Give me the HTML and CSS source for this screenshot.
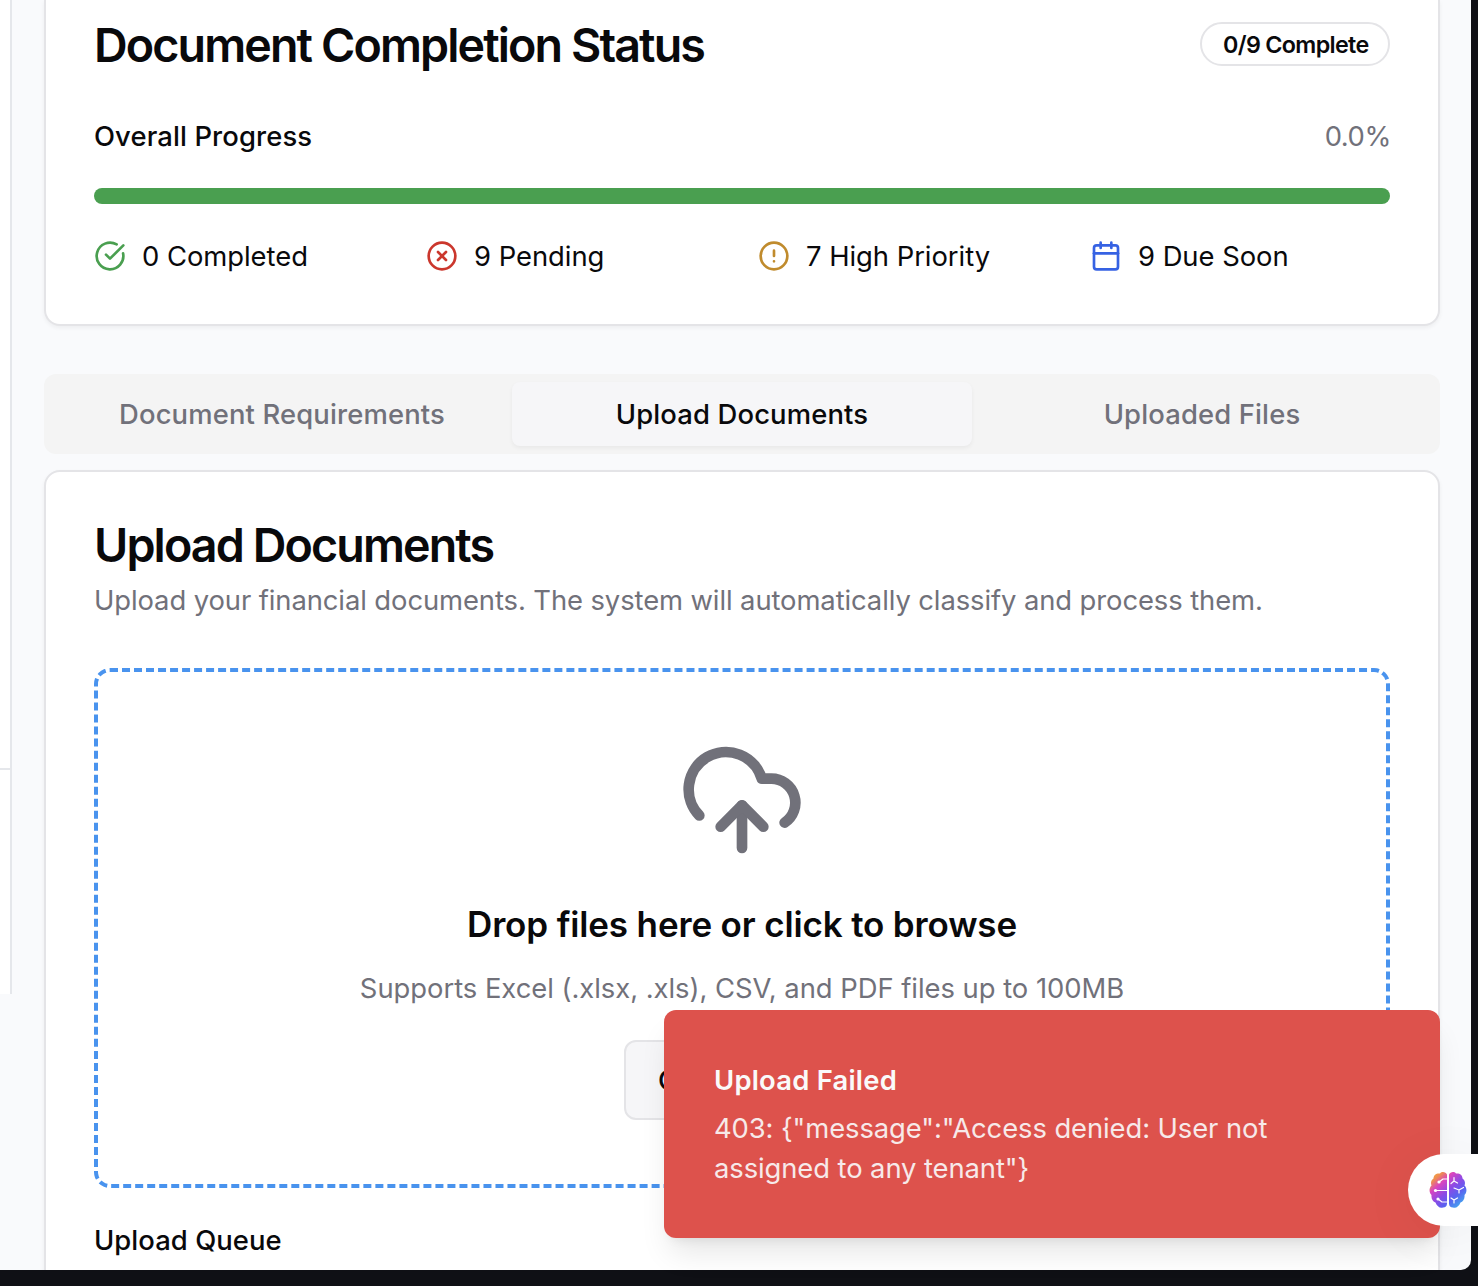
FILE: index.html
```html
<!DOCTYPE html>
<html lang="en">
<head>
<meta charset="utf-8">
<title>Upload Documents</title>
<link rel="stylesheet" href="styles.css">
</head>
<body>
<div class="window">
  <aside class="sidebar"><div class="sidebar-section"></div></aside>
  <main class="main">
    <section class="card status-card">
      <div class="card-header">
        <h2 class="card-title title-status">Document Completion Status</h2>
        <span class="badge">0/9 Complete</span>
      </div>
      <div class="progress-row">
        <span class="label">Overall Progress</span>
        <span class="percent">0.0%</span>
      </div>
      <div class="progress"></div>
      <div class="stats">
        <div class="stat">
          <svg class="icon green" viewBox="0 0 24 24"><path d="M21.801 10A10 10 0 1 1 17 3.335"/><path d="m9 11 3 3L22 4"/></svg>
          <span>0 Completed</span>
        </div>
        <div class="stat">
          <svg class="icon red" viewBox="0 0 24 24"><circle cx="12" cy="12" r="10"/><path d="m15 9-6 6M9 9l6 6"/></svg>
          <span>9 Pending</span>
        </div>
        <div class="stat">
          <svg class="icon amber" viewBox="0 0 24 24"><circle cx="12" cy="12" r="10"/><path d="M12 8v4M12 16h.01"/></svg>
          <span>7 High Priority</span>
        </div>
        <div class="stat">
          <svg class="icon blue" viewBox="0 0 24 24"><path d="M8 2v4M16 2v4"/><rect width="18" height="18" x="3" y="4" rx="2"/><path d="M3 10h18"/></svg>
          <span>9 Due Soon</span>
        </div>
      </div>
    </section>

    <nav class="tabs">
      <span class="tab">Document Requirements</span>
      <span class="tab active">Upload Documents</span>
      <span class="tab">Uploaded Files</span>
    </nav>

    <section class="card upload-card">
      <h2 class="card-title">Upload Documents</h2>
      <p class="description">Upload your financial documents. The system will automatically classify and process them.</p>
      <div class="dropzone">
        <svg class="icon cloud" viewBox="0 0 24 24"><path d="M4 14.899A7 7 0 1 1 15.71 8h1.79a4.5 4.5 0 0 1 2.5 8.242"/><path d="M12 13v8"/><path d="m16 17-4-4-4 4"/></svg>
        <h3 class="drop-title">Drop files here or click to browse</h3>
        <p class="drop-hint">Supports Excel (.xlsx, .xls), CSV, and PDF files up to 100MB</p>
        <button class="button">Choose Files</button>
      </div>
      <h4 class="queue-title">Upload Queue</h4>
    </section>
  </main>
</div>

<div class="toast">
  <div class="toast-title">Upload Failed</div>
  <div class="toast-text">403: {"message":"Access denied: User not assigned to any tenant"}</div>
</div>

<div class="assistant">
  <svg class="brain" viewBox="0 0 38 38">
    <defs>
      <linearGradient id="brain-fill" x1="0.1" y1="0.05" x2="0.9" y2="0.95">
        <stop offset="0" stop-color="#f3a63c"/>
        <stop offset=".12" stop-color="#ee8a55"/>
        <stop offset=".28" stop-color="#d944c0"/>
        <stop offset=".52" stop-color="#8a4be6"/>
        <stop offset=".72" stop-color="#5a62f0"/>
        <stop offset="1" stop-color="#3fb2ee"/>
      </linearGradient>
    </defs>
    <path fill="url(#brain-fill)" d="M18 3.500C17 1 13 0 11 2.500 7.500 2 4.500 4 4.500 7.500 2 9 1.500 12 2.500 14.500-.2 17 0 22 2.500 24 2 28 4 30.500 6.500 31.500 8 35.500 11 37.500 14 36.500c2.500 0 4-1.500 4-4V3.500zM20 3.500C21 1 25 0 27 2.500c3.500-.5 6.500 1.500 6.500 5 2.500 1.500 3 4.500 2 7 2.700 2.500 2.500 7.500 0 9.500.5 4-1.500 6.500-4 7.500-1.500 4-4.500 6-7.500 5-2.500 0-4-1.500-4-4V3.500z"/>
    <path class="brain-lines" d="M18 8h-4l-4 3M18 19.500H6M18 31h-5l-4-3M25 6.500V10l-3 2.500M25 10l3.500 2M25 17l5 2 4.500-2.500M30 19v3M22 27l3 2 3.500-2M25 29v3"/>
    <g fill="#fff"><circle cx="10" cy="11" r="1.600"/><circle cx="6.500" cy="19.500" r="1.600"/><circle cx="9" cy="28" r="1.600"/></g>
  </svg>
</div>
</body>
</html>
```

FILE: styles.css
```css
* { box-sizing: border-box; }

body {
  margin: 0;
  width: 1478px;
  height: 1286px;
  overflow: hidden;
  background: #0f1015;
  color: #09090b;
  font: 400 27.4px/40px Inter, "Liberation Sans", sans-serif;
  letter-spacing: -.09px;
}

h2, h3, h4, p { margin: 0; }

.window {
  display: flex;
  align-items: flex-start;
  width: 1471px;
  height: 1270px;
  overflow: hidden;
  background: #f9fafc;
  border-bottom-right-radius: 10px;
}

.sidebar {
  flex: none;
  width: 12px;
  height: 994px;
  background: #fff;
  border-right: 2px solid #e5e7eb;
}

.sidebar-section { height: 770px; border-bottom: 2px solid #e5e7eb; }

.main { width: 1428px; padding-left: 32px; }

.card {
  background: #fff;
  border: 2px solid #e4e4e7;
  border-radius: 16px;
  box-shadow: 0 2px 4px rgba(0, 0, 0, .05);
}

.status-card {
  border-top: 0;
  border-radius: 0 0 16px 16px;
  padding: 20px 48px 48px;
}

.card-header {
  display: flex;
  justify-content: space-between;
  align-items: center;
  height: 48px;
  margin-bottom: 48px;
}

.card-title {
  font-size: 46.6px;
  line-height: 50px;
  font-weight: 600;
  letter-spacing: -1.88px;
}

.title-status { padding-top: 2px; }

.badge {
  width: 190px;
  height: 44px;
  padding: 3px 0 0 21px;
  border: 2px solid #e4e4e7;
  border-radius: 22px;
  font-size: 23.3px;
  line-height: 36px;
  font-weight: 600;
  letter-spacing: -.66px;
  white-space: nowrap;
}

.progress-row { display: flex; justify-content: space-between; }
.label { font-weight: 500; letter-spacing: .12px; }
.percent { margin-right: -1px; color: #71717a; letter-spacing: -.4px; }

.progress {
  height: 16px;
  margin: 32px 0;
  border-radius: 8px;
  background: #4a9f50;
}

.stats { display: grid; grid-template-columns: repeat(4, 1fr); gap: 32px; }
.stat { display: flex; align-items: center; gap: 16px; white-space: nowrap; letter-spacing: -.03px; }

.icon {
  flex: none;
  width: 32px;
  height: 32px;
  fill: none;
  stroke: currentColor;
  stroke-width: 2;
  stroke-linecap: round;
  stroke-linejoin: round;
}
.green { color: #4a9f50; }
.red { color: #cb372d; }
.amber { color: #c08b2d; }
.blue { color: #3662e3; }

.tabs {
  display: grid;
  grid-template-columns: repeat(3, 1fr);
  margin: 48px 0 16px;
  padding: 8px;
  border-radius: 12px;
  background: #f4f4f4;
}

.tab {
  padding: 12px;
  text-align: center;
  font-weight: 500;
  letter-spacing: .15px;
  color: #71717a;
  border-radius: 8px;
}

.tab.active {
  background: #f6f6f8;
  color: #09090b;
  box-shadow: 0 2px 4px rgba(0, 0, 0, .05);
}

.upload-card { padding: 48px; }
.description { margin-top: 10px; color: #71717a; white-space: nowrap; }

.dropzone {
  display: flex;
  flex-direction: column;
  align-items: center;
  margin-top: 48px;
  padding: 64px;
  border: 4px dashed #4993ee;
  border-radius: 16px;
}

.cloud { width: 128px; height: 128px; color: #71717a; }
.drop-title {
  margin-top: 32px;
  font-size: 35px;
  line-height: 56px;
  font-weight: 600;
  letter-spacing: -.15px;
}
.drop-hint { margin-top: 16px; color: #71717a; letter-spacing: -.03px; }

.button {
  margin-top: 32px;
  width: 236px;
  height: 80px;
  padding: 0 32px;
  border: 2px solid #e4e4e7;
  border-radius: 12px;
  background: #f6f6f8;
  color: #09090b;
  font: 500 27.4px/40px Inter, "Liberation Sans", sans-serif;
  letter-spacing: .1px;
  text-align: left;
  white-space: nowrap;
}

.queue-title { margin-top: 32px; font-size: 27.4px; font-weight: 500; letter-spacing: .06px; }

.toast {
  position: absolute;
  left: 664px;
  top: 1010px;
  width: 776px;
  height: 228px;
  padding: 50px;
  border-radius: 12px;
  background: #dd524c;
  color: #fafafa;
  box-shadow: 0 20px 30px -6px rgba(0, 0, 0, .1), 0 8px 12px -8px rgba(0, 0, 0, .1);
}

.toast-title { font-weight: 600; letter-spacing: .23px; }
.toast-text { margin-top: 8px; width: 600px; opacity: .9; }

.assistant {
  position: absolute;
  left: 1408px;
  top: 1154px;
  width: 70px;
  height: 72px;
  padding: 17px 0 0 21px;
  border-radius: 36px 0 0 36px;
  background: #fff;
  box-shadow: 0 8px 60px rgba(0, 0, 0, .05);
}

.brain { display: block; width: 38px; height: 38px; }
.brain-lines { fill: none; stroke: #fff; stroke-width: 1.2; stroke-linecap: round; stroke-linejoin: round; }
```
